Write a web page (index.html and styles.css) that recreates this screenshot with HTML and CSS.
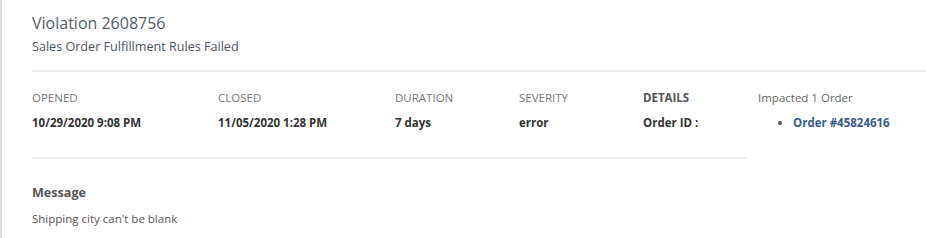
FILE: index.html
```html
<!DOCTYPE html>
<html>
<head>
<meta charset="utf-8">
<link rel="stylesheet" href="styles.css">
</head>
<body>
<div class="panel">
  <div class="header">
    <div class="title">Violation 2608756</div>
    <div class="subtitle">Sales Order Fulfillment Rules Failed</div>
  </div>
  <div class="body">
    <div class="main">
      <div class="facts">
        <div class="fact w1">
          <div class="label">OPENED</div>
          <div class="value">10/29/2020 9:08 PM</div>
        </div>
        <div class="fact w2">
          <div class="label">CLOSED</div>
          <div class="value">11/05/2020 1:28 PM</div>
        </div>
        <div class="fact w3">
          <div class="label">DURATION</div>
          <div class="value">7 days</div>
        </div>
        <div class="fact w3">
          <div class="label">SEVERITY</div>
          <div class="value">error</div>
        </div>
        <div class="fact w4">
          <div class="label label-strong">DETAILS</div>
          <div class="value">Order ID :</div>
        </div>
      </div>
      <div class="message">
        <div class="message-title">Message</div>
        <div class="message-text">Shipping city can't be blank</div>
      </div>
    </div>
    <div class="side">
      <div class="side-label">Impacted 1 Order</div>
      <ul class="orders">
        <li><a class="order-link" href="#">Order #45824616</a></li>
      </ul>
    </div>
  </div>
</div>
</body>
</html>
```

FILE: styles.css
```css
html, body {
  margin: 0;
  padding: 0;
  background: #fff;
}
body {
  font-family: "Open Sans", "Liberation Sans", sans-serif;
  color: #555;
}
.panel {
  border-left: 2px solid #ddd;
  height: 238px;
  box-sizing: border-box;
  padding-left: 30px;
}
.header {
  padding-top: 11px;
  padding-bottom: 14px;
  border-bottom: 2px solid #eee;
}
.title {
  font-size: 16px;
  line-height: 24px;
  color: #555b66;
}
.subtitle {
  font-size: 12.6px;
  line-height: 18px;
  margin-top: 3px;
  color: #4f5560;
}
.body {
  display: flex;
}
.main {
  width: 715px;
}
.facts {
  display: flex;
  padding-top: 18px;
  padding-bottom: 26px;
  border-bottom: 2px solid #eee;
}
.w1 { width: 186px; }
.w2 { width: 177px; }
.w3 { width: 124px; }
.w4 { width: 104px; }
.label {
  font-size: 11.5px;
  line-height: 16px;
  color: #777;
}
.label-strong {
  font-weight: 700;
  color: #555;
}
.value {
  margin-top: 9px;
  font-size: 11.5px;
  line-height: 16px;
  font-weight: 700;
  color: #333;
}
.message {
  padding-top: 25px;
}
.message-title {
  font-size: 12.6px;
  line-height: 18px;
  font-weight: 700;
  color: #555;
}
.message-text {
  margin-top: 9px;
  font-size: 11.5px;
  line-height: 16px;
  color: #555;
}
.side {
  margin-left: 11px;
  padding-top: 18px;
}
.side-label {
  font-size: 11.5px;
  line-height: 16px;
  color: #666;
}
.orders {
  margin: 9px 0 0;
  padding-left: 35px;
  font-size: 11.5px;
  line-height: 16px;
  color: #555;
}
.order-link {
  font-weight: 700;
  color: #3a5a8c;
  text-decoration: none;
}
```
